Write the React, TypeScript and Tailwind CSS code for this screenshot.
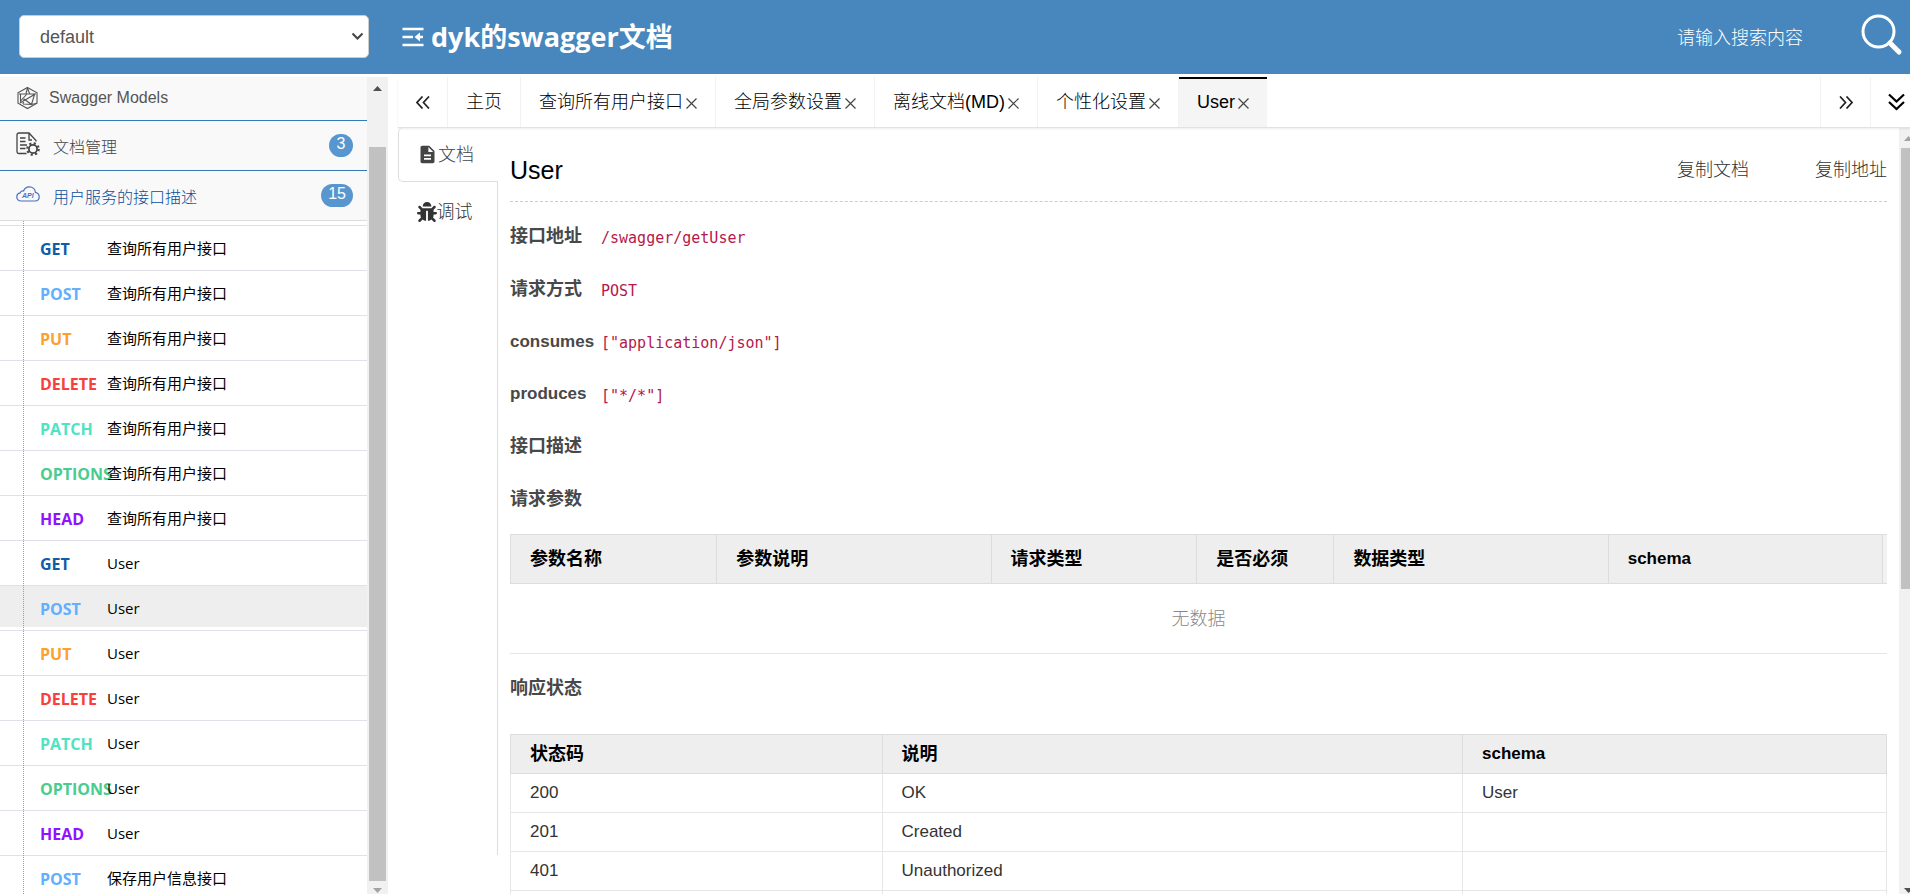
import type { ReactNode } from 'react';
import { FaBug } from 'react-icons/fa';
import { MdDescription } from 'react-icons/md';

type Method = 'GET' | 'POST' | 'PUT' | 'DELETE' | 'PATCH' | 'OPTIONS' | 'HEAD';

interface Endpoint {
  method: Method;
  name: string;
  active?: boolean;
}

const METHOD_COLORS: Record<Method, string> = {
  GET: 'text-[#0f5ca8]',
  POST: 'text-[#61affe]',
  PUT: 'text-[#fca130]',
  DELETE: 'text-[#f93e3e]',
  PATCH: 'text-[#50e3c2]',
  OPTIONS: 'text-[#49cc90]',
  HEAD: 'text-[#9012fe]',
};

const METHODS: Method[] = ['GET', 'POST', 'PUT', 'DELETE', 'PATCH', 'OPTIONS', 'HEAD'];

const ENDPOINTS: Endpoint[] = [
  ...METHODS.map((method) => ({ method, name: '查询所有用户接口' })),
  ...METHODS.map((method) => ({ method, name: 'User', active: method === 'POST' })),
  { method: 'POST', name: '保存用户信息接口' },
];

const TABS = [
  { title: '主页', closable: false },
  { title: '查询所有用户接口', closable: true },
  { title: '全局参数设置', closable: true },
  { title: '离线文档(MD)', closable: true },
  { title: '个性化设置', closable: true },
  { title: 'User', closable: true, active: true },
];

const INFO = [
  { label: '接口地址', value: '/swagger/getUser' },
  { label: '请求方式', value: 'POST' },
  { label: 'consumes', value: '["application/json"]', latin: true },
  { label: 'produces', value: '["*/*"]', latin: true },
  { label: '接口描述', value: '' },
  { label: '请求参数', value: '' },
];

const PARAM_COLUMNS = [
  { title: '参数名称', width: 'w-[15%]' },
  { title: '参数说明', width: 'w-[20%]' },
  { title: '请求类型', width: 'w-[15%]' },
  { title: '是否必须', width: 'w-[10%]' },
  { title: '数据类型', width: 'w-[20%]' },
  { title: 'schema', width: 'w-[20%]' },
];

const RESPONSES = [
  { code: '200', text: 'OK', schema: 'User' },
  { code: '201', text: 'Created', schema: '' },
  { code: '401', text: 'Unauthorized', schema: '' },
  { code: '', text: '', schema: '' },
];

export default function App() {
  return (
    <div className="flex h-screen flex-col overflow-hidden bg-white font-['Liberation_Sans','Noto_Sans_CJK_SC',sans-serif] font-light text-[#333]">
      <Header />
      <div className="flex min-h-0 flex-1 pt-[3px]">
        <Sidebar />
        <main className="ml-[10px] flex min-w-0 flex-1 flex-col">
          <TabBar />
          <div className="flex min-h-0 flex-1">
            <SideTabs />
            <Document />
            <MainScrollbar />
          </div>
        </main>
      </div>
    </div>
  );
}

// ── Header ────────────────────────────────────────────────────────────────────

function Header() {
  return (
    <header className="flex h-[74px] shrink-0 items-center bg-[#4787be] text-white">
      <div className="relative mb-[2px] ml-[19px] w-[350px]">
        <select
          aria-label="group"
          className="h-[43px] w-full appearance-none rounded-[5px] border border-[#ccc] bg-white px-5 pt-[2px] text-lg text-[#555]"
        >
          <option>default</option>
        </select>
        <svg
          className="pointer-events-none absolute right-[5px] top-[17px] h-[9px] w-[13px]"
          viewBox="0 0 13 9"
          fill="none"
          stroke="#444"
          strokeWidth="2"
        >
          <path d="M1.5 1.5 L6.5 6.5 L11.5 1.5" />
        </svg>
      </div>
      <h1 className="ml-[33px] flex items-center gap-[7px] font-['Open_Sans','Noto_Sans_CJK_SC',sans-serif] text-[27px] font-bold">
        <button aria-label="toggle menu">
          <FoldIcon />
        </button>
        dyk的swagger文档
      </h1>
      <input
        aria-label="search"
        placeholder="请输入搜索内容"
        className="ml-auto w-[184px] bg-transparent pt-[2px] text-lg text-white outline-none placeholder:text-white"
      />
      <button aria-label="search" className="mr-[6px] pb-1">
        <svg className="h-[42px] w-[43px]" viewBox="0 0 43 42" fill="none" stroke="#fff" strokeLinecap="round">
          <circle cx="17.5" cy="17.5" r="15.5" strokeWidth="3" />
          <path d="M29 29 L38 38" strokeWidth="5" />
        </svg>
      </button>
    </header>
  );
}

function FoldIcon() {
  return (
    <svg className="h-5 w-[22px]" viewBox="0 0 22 20" fill="none" stroke="#fff" strokeWidth="2.4">
      <path d="M0.5 2 H21.5 M0.5 10 H11 M0.5 18 H21.5" />
      <path d="M12.5 10 L18 5.5 V8.8 H21 V11.2 H18 V14.5 Z" fill="#fff" stroke="none" />
    </svg>
  );
}

// ── Sidebar ───────────────────────────────────────────────────────────────────

function Sidebar() {
  return (
    <aside className="flex w-[388px] shrink-0">
      <nav className="min-w-0 flex-1 overflow-hidden">
        <a href="#models" className="flex h-11 items-center gap-[11px] border-b border-[#337ab7] bg-[#f9f9f9] pl-[17px] pb-[2px] text-base text-[#555]">
          <ModelsIcon />
          Swagger Models
        </a>
        <SidebarGroup icon={<DocsIcon />} title="文档管理" count={3} className="border-[#337ab7] text-[#444]" />
        <SidebarGroup icon={<ApiIcon />} title="用户服务的接口描述" count={15} className="border-[#ddd] text-[#0a4c9a]" />
        <div className="relative pt-1">
          <ul>
            {ENDPOINTS.map((endpoint, i) => (
              <EndpointRow key={i} {...endpoint} />
            ))}
          </ul>
          <span className="absolute inset-y-0 left-[23px] border-l border-dotted border-[#8aa0bc]" />
        </div>
      </nav>
      <div className="flex w-[21px] flex-col items-center bg-[#f1f1f1]">
        <Arrow up className="mt-[9px] text-[#505050]" />
        <div className="mt-14 w-[17px] flex-1 bg-[#c1c1c1]" />
        <Arrow className="mb-[1px] mt-[7px] text-[#a3a3a3]" />
      </div>
    </aside>
  );
}

function SidebarGroup({
  icon,
  title,
  count,
  className,
}: {
  icon: ReactNode;
  title: string;
  count: number;
  className: string;
}) {
  return (
    <a href="#group" className={`flex h-[50px] items-center border-b bg-[#f9f9f9] pl-4 pr-[14px] text-base ${className}`}>
      {icon}
      <span className="ml-[13px] flex-1 pt-1">{title}</span>
      <span className="h-[23px] min-w-6 rounded-full bg-[#5796cf] px-[7px] text-center text-base leading-5 text-white">
        {count}
      </span>
    </a>
  );
}

function EndpointRow({ method, name, active }: Endpoint) {
  return (
    <li className="h-[45px] border-t border-[#dfe0e8] pb-[3px]">
      <a
        href="#endpoint"
        className={`flex h-full items-center pl-10 pt-1 font-['Open_Sans','Noto_Sans_CJK_SC',sans-serif] ${active ? 'bg-[#eee]' : ''}`}
      >
        <span className={`w-[67px] shrink-0 text-base font-bold ${METHOD_COLORS[method]}`}>{method}</span>
        <span className="text-[15px] font-normal text-black">{name}</span>
      </a>
    </li>
  );
}

function ModelsIcon() {
  return (
    <svg className="h-6 w-[21px]" viewBox="0 0 21 24" fill="none" stroke="currentColor" strokeWidth="1.1">
      <path d="M10.5 1.5 L20 6.8 V17.2 L10.5 22.5 L1 17.2 V6.8 Z" />
      <path d="M10.5 2 L9 7.5 M10.5 2 L12.5 7.5 M2 8 H19 M3.5 8 V15 L9.5 8.5 M3 17 L17.5 8.5 L14.5 18.5 L7 13 M6 18 L14.5 18.5 L20 17.2 M7 13 L6 18" />
    </svg>
  );
}

function DocsIcon() {
  return (
    <svg className="mb-[3px] h-6 w-6" viewBox="0 0 24 24" fill="none" stroke="currentColor" strokeWidth="1.3">
      <path d="M10.5 21.5 H3 Q1 21.5 1 19.5 V3 Q1 1 3 1 H13 L20 8.5 V9.5 M13 1 V8 H16" />
      <path d="M4 6 H9.5 M4 9.5 H9.5 M4 13 H11 M4 16.5 H9.5" />
      <circle cx="17" cy="17" r="4.1" strokeWidth="1.8" />
      <circle cx="17" cy="17" r="5.8" strokeWidth="2" strokeDasharray="2.2 2.35" />
    </svg>
  );
}

function ApiIcon() {
  return (
    <svg className="mb-[3px] h-4 w-6" viewBox="0 0 24 16" fill="none" stroke="#4b6fc0" strokeWidth="1.2">
      <path d="M5 15 C2.5 15 0.8 13.2 0.8 11 C0.8 8.8 2.3 7.2 4.2 6.9 C4.6 5.3 6 4.6 7.6 5 C8.4 2.4 10.8 0.8 13.4 0.8 C16.8 0.8 19.2 3.2 19.4 6.4 C21.7 6.9 23.2 8.5 23.2 10.8 C23.2 13.2 21.4 15 19 15 Z" />
      <text x="6" y="11.5" fontSize="7" fontStyle="italic" fontWeight="bold" fill="#4b6fc0" stroke="none">
        API
      </text>
    </svg>
  );
}

function Arrow({ up = false, className }: { up?: boolean; className: string }) {
  return (
    <svg className={`h-[5px] w-[9px] shrink-0 ${className}`} viewBox="0 0 9 5" fill="currentColor">
      <path d={up ? 'M0 5 L4.5 0 L9 5 Z' : 'M0 0 L4.5 5 L9 0 Z'} />
    </svg>
  );
}

// ── Tabs ──────────────────────────────────────────────────────────────────────

function TabBar() {
  return (
    <div className="z-10 flex h-[51px] shrink-0 border-b border-[#e2e2e2] text-lg text-black shadow-[0_1px_2px_rgba(0,0,0,0.08)]">
      <button aria-label="previous" className="flex w-[50px] items-center justify-center border-r border-[#f2f2f2]">
        <svg className="h-[13px] w-[14px]" viewBox="0 0 14 13" fill="none" stroke="#222" strokeWidth="1.7">
          <path d="M6.5 0.5 L1 6.5 L6.5 12.5 M13 0.5 L7.5 6.5 L13 12.5" />
        </svg>
      </button>
      {TABS.map((tab) => (
        <button
          key={tab.title}
          className={`flex items-center whitespace-nowrap px-[18px] ${
            tab.active ? 'border-t-2 border-black bg-[#f5f5f5] pb-[2px]' : 'border-r border-[#f2f2f2]'
          }`}
        >
          {tab.title}
          {tab.closable && <CloseIcon />}
        </button>
      ))}
      <button aria-label="next" className="ml-auto flex w-[51px] items-center justify-center border-x border-[#f2f2f2]">
        <svg className="h-[13px] w-[14px]" viewBox="0 0 14 13" fill="none" stroke="#222" strokeWidth="1.7">
          <path d="M1 0.5 L6.5 6.5 L1 12.5 M7.5 0.5 L13 6.5 L7.5 12.5" />
        </svg>
      </button>
      <button aria-label="more" className="flex w-[39px] items-center pl-[17px]">
        <svg className="h-[18px] w-[17px]" viewBox="0 0 17 18" fill="none" stroke="#000" strokeWidth="2.2">
          <path d="M1 1.5 L8.5 8.5 L16 1.5 M1 9 L8.5 16 L16 9" />
        </svg>
      </button>
    </div>
  );
}

function CloseIcon() {
  return (
    <svg className="ml-[3px] mt-[2px] h-[11px] w-[11px]" viewBox="0 0 11 11" fill="none" stroke="#444" strokeWidth="1.2">
      <path d="M0.5 0.5 L10.5 10.5 M10.5 0.5 L0.5 10.5" />
    </svg>
  );
}

function SideTabs() {
  return (
    <div className="mb-[39px] flex w-[100px] shrink-0 flex-col text-lg">
      <button className="flex h-[54px] items-center justify-center rounded-l-[5px] border-b border-l border-[#ddd] pr-[6px] text-[#444]">
        <MdDescription className="h-[21px] w-[21px]" />
        文档
      </button>
      <div className="flex-1 border-r border-[#ddd]">
        <button className="flex h-[60px] w-full items-center justify-center pr-[6px] text-[#333]">
          <FaBug className="h-5 w-5" />
          调试
        </button>
      </div>
    </div>
  );
}

// ── Document ──────────────────────────────────────────────────────────────────

function Document() {
  return (
    <article className="min-w-0 flex-1 overflow-hidden px-3">
      <div className="flex h-[74px] items-center border-b border-dashed border-[#ccc] pt-[10px] text-lg">
        <h2 className="flex-1 pt-[2px] text-[25px] text-black">User</h2>
        <button className="mr-[66px]">复制文档</button>
        <button>复制地址</button>
      </div>

      <dl className="mt-2 grid h-[315px] auto-rows-fr">
        {INFO.map((row) => (
          <div key={row.label} className="flex items-center">
            <dt className={`w-[91px] font-bold text-[#484848] ${row.latin ? 'text-[17px]' : 'text-lg'}`}>{row.label}</dt>
            <dd className="pt-1 font-['DejaVu_Sans_Mono',monospace] text-[15px] text-[#b5184a]">{row.value}</dd>
          </div>
        ))}
      </dl>

      <ParamTable />
      <h3 className="flex h-[70px] items-center pb-[2px] text-lg font-bold text-[#484848]">响应状态</h3>
      <ResponseTable />
    </article>
  );
}

function ParamTable() {
  return (
    <div className="mt-[9px] border-b border-[#e6e6e6]">
      <div className="border-y border-l border-[#ddd] bg-[#f2f2f2] pr-1">
        <table className="w-full table-fixed bg-[#eee]">
          <thead>
            <tr className="h-12">
              {PARAM_COLUMNS.map((column) => (
                <th
                  key={column.title}
                  className={`border-r border-[#ddd] pl-[19px] text-left font-bold text-black ${column.width} ${
                    column.title === 'schema' ? 'text-[17px]' : 'text-lg'
                  }`}
                >
                  {column.title}
                </th>
              ))}
            </tr>
          </thead>
        </table>
      </div>
      <p className="flex h-[69px] items-center justify-center text-lg text-[#888]">无数据</p>
    </div>
  );
}

function ResponseTable() {
  return (
    <table className="mt-[10px] w-full table-fixed border-collapse border border-[#ddd] text-left text-[17px]">
      <thead className="bg-[#eee] text-black">
        <tr className="h-[39px]">
          <th className="w-[27%] border border-[#ddd] pl-[19px] text-lg leading-6">状态码</th>
          <th className="border border-[#ddd] pl-[19px] text-lg leading-6">说明</th>
          <th className="w-[424px] border border-[#ddd] pl-[19px]">schema</th>
        </tr>
      </thead>
      <tbody>
        {RESPONSES.map((response, i) => (
          <tr key={i} className="h-[39px]">
            <td className="border border-[#e6e6e6] pl-[19px]">{response.code}</td>
            <td className="border border-[#e6e6e6] pl-[19px]">{response.text}</td>
            <td className="border border-[#e6e6e6] pl-[19px]">{response.schema}</td>
          </tr>
        ))}
      </tbody>
    </table>
  );
}

function MainScrollbar() {
  return (
    <div className="flex w-[11px] shrink-0 flex-col overflow-hidden bg-[#f1f1f1] pl-[2px]">
      <Arrow up className="ml-[3px] mt-2 text-[#a3a3a3]" />
      <div className="mt-[7px] h-[441px] bg-[#c1c1c1]" />
      <Arrow className="mb-[1px] ml-[3px] mt-auto text-[#505050]" />
    </div>
  );
}
